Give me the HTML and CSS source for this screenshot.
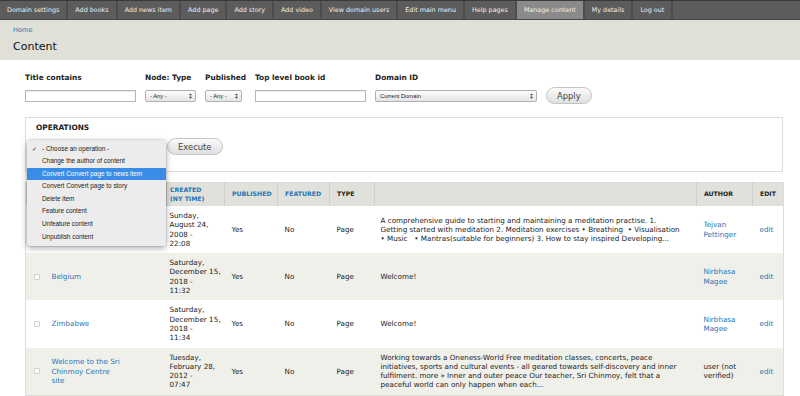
FILE: index.html
```html
<!DOCTYPE html>
<html lang="en">
<head>
    <meta charset="UTF-8">
    <meta name="viewport" content="width=device-width, initial-scale=1.0">
    <title>Content</title>
    <link rel="stylesheet" href="styles.css">
</head>
<body>
    <nav class="toolbar">
        <a href="#">Domain settings</a>
        <a href="#">Add books</a>
        <a href="#">Add news item</a>
        <a href="#">Add page</a>
        <a href="#">Add story</a>
        <a href="#">Add video</a>
        <a href="#">View domain users</a>
        <a href="#">Edit main menu</a>
        <a href="#">Help pages</a>
        <a href="#" class="active">Manage content</a>
        <a href="#">My details</a>
        <a href="#">Log out</a>
    </nav>

    <header class="page-head">
        <a class="crumb" href="#">Home</a>
        <h1>Content</h1>
    </header>

    <div class="content">
        <form class="filters">
            <div class="filter w-text">
                <label>Title contains</label>
                <input type="text" class="text-input">
            </div>
            <div class="filter w-type">
                <label>Node: Type</label>
                <div class="select">- Any -<svg class="arrows" viewBox="0 0 4 8"><path d="M0 3 L2 0.5 L4 3 Z M0 5 L2 7.5 L4 5 Z"/></svg></div>
            </div>
            <div class="filter w-pub">
                <label>Published</label>
                <div class="select">- Any -<svg class="arrows" viewBox="0 0 4 8"><path d="M0 3 L2 0.5 L4 3 Z M0 5 L2 7.5 L4 5 Z"/></svg></div>
            </div>
            <div class="filter w-text">
                <label>Top level book id</label>
                <input type="text" class="text-input">
            </div>
            <div class="filter w-domain">
                <label>Domain ID</label>
                <div class="select">Current Domain<svg class="arrows" viewBox="0 0 4 8"><path d="M0 3 L2 0.5 L4 3 Z M0 5 L2 7.5 L4 5 Z"/></svg></div>
            </div>
            <button type="button" class="btn btn-apply">Apply</button>
        </form>

        <div class="operations">
            <div class="op-title">OPERATIONS</div>
            <div class="op-row">
                <div class="op-select">
                    <div class="select">- Choose an operation -</div>
                    <ul class="menu">
                        <li class="checked">- Choose an operation -</li>
                        <li>Change the author of content</li>
                        <li class="hover">Convert Convert page to news item</li>
                        <li>Convert Convert page to story</li>
                        <li>Delete item</li>
                        <li>Feature content</li>
                        <li>Unfeature content</li>
                        <li>Unpublish content</li>
                    </ul>
                </div>
                <button type="button" class="btn">Execute</button>
            </div>
        </div>

        <table class="nodes">
            <colgroup>
                <col style="width:21px">
                <col style="width:120px">
                <col style="width:58px">
                <col style="width:53px">
                <col style="width:52px">
                <col style="width:45px">
                <col style="width:322px">
                <col style="width:56px">
                <col style="width:31px">
            </colgroup>
            <thead>
                <tr>
                    <th class="cb"></th>
                    <th class="title"><a href="#">TITLE</a></th>
                    <th class="created"><a href="#">CREATED (NY TIME)</a></th>
                    <th><a href="#">PUBLISHED</a></th>
                    <th><a href="#">FEATURED</a></th>
                    <th>TYPE</th>
                    <th></th>
                    <th>AUTHOR</th>
                    <th>EDIT</th>
                </tr>
            </thead>
            <tbody>
                <tr>
                    <td class="cb"><input type="checkbox"></td>
                    <td class="title"><a href="#">Meditation</a></td>
                    <td class="created">Sunday, August 24, 2008 -<br>22:08</td>
                    <td>Yes</td>
                    <td>No</td>
                    <td>Page</td>
                    <td class="body">A comprehensive guide to starting and maintaining a meditation practise. 1.<br>Getting started with meditation 2. Meditation exercises &bull; Breathing &nbsp;&bull; Visualisation &bull;&nbsp;Music &nbsp; &bull; Mantras(suitable for beginners) 3. How to stay inspired Developing...</td>
                    <td class="author"><a href="#">Tejvan Pettinger</a></td>
                    <td><a href="#">edit</a></td>
                </tr>
                <tr class="even">
                    <td class="cb"><input type="checkbox"></td>
                    <td class="title"><a href="#">Belgium</a></td>
                    <td class="created">Saturday, December 15, 2018 -<br>11:32</td>
                    <td>Yes</td>
                    <td>No</td>
                    <td>Page</td>
                    <td class="body">Welcome!</td>
                    <td class="author"><a href="#">Nirbhasa Magee</a></td>
                    <td><a href="#">edit</a></td>
                </tr>
                <tr>
                    <td class="cb"><input type="checkbox"></td>
                    <td class="title"><a href="#">Zimbabwe</a></td>
                    <td class="created">Saturday, December 15, 2018 -<br>11:34</td>
                    <td>Yes</td>
                    <td>No</td>
                    <td>Page</td>
                    <td class="body">Welcome!</td>
                    <td class="author"><a href="#">Nirbhasa Magee</a></td>
                    <td><a href="#">edit</a></td>
                </tr>
                <tr class="even">
                    <td class="cb"><input type="checkbox"></td>
                    <td class="title"><a href="#">Welcome to the Sri<br>Chinmoy Centre<br>site</a></td>
                    <td class="created">Tuesday, February 28, 2012 -<br>07:47</td>
                    <td>Yes</td>
                    <td>No</td>
                    <td>Page</td>
                    <td class="body">Working towards a Oneness-World Free meditation classes, concerts, peace initiatives, sports and cultural events - all geared towards self-discovery and inner fulfilment. more &raquo; Inner and outer peace Our teacher, Sri Chinmoy, felt that a peaceful world can only happen when each...</td>
                    <td class="author">user (not verified)</td>
                    <td><a href="#">edit</a></td>
                </tr>
            </tbody>
        </table>
    </div>
</body>
</html>
```

FILE: styles.css
```css
body {
    margin: 0;
    width: 800px;
    height: 396px;
    overflow: hidden;
    font-family: "DejaVu Sans", sans-serif;
    font-size: 7.2px;
    color: #333;
    background-color: #fff;
}
a {
    color: #1e74b8;
    text-decoration: none;
}

/* admin toolbar */
.toolbar {
    display: flex;
    height: 20px;
    box-sizing: border-box;
    background-color: #5c5c5c;
    border-top: 1px solid #3a3a3a;
    border-bottom: 1px solid #464646;
}
.toolbar a {
    display: flex;
    align-items: center;
    padding: 0 7px;
    color: #eee;
    font-size: 6.4px;
    border-right: 2px solid #4c4c4c;
}
.toolbar a.active {
    background-color: #8a8a8a;
}

/* page header */
.page-head {
    height: 40px;
    box-sizing: border-box;
    padding: 6px 13px;
    background-color: #e0e0d9;
}
.crumb {
    display: block;
    font-size: 6.6px;
    line-height: 9px;
}
.page-head h1 {
    margin: 5px 0 0;
    font-size: 11px;
    line-height: 14px;
    font-weight: normal;
    color: #111;
}

.content {
    padding: 13px 17px 0 25px;
}

/* exposed filters */
.filters {
    display: flex;
    align-items: flex-end;
    gap: 9px;
}
.filter {
    display: flex;
    flex-direction: column;
}
.filter label {
    font-size: 7.4px;
    line-height: 9px;
    font-weight: bold;
    color: #222;
    margin-bottom: 8px;
    white-space: nowrap;
}
.w-text { width: 111px; }
.w-type { width: 51px; }
.w-pub { width: 41px; }
.w-domain { width: 162px; }
.w-pub .select { width: 37px; }

.text-input {
    height: 12px;
    box-sizing: border-box;
    margin: 0;
    border: 1px solid #b8b8b8;
    box-shadow: inset 0 1px 1px rgba(0,0,0,0.08);
}
.select {
    display: flex;
    align-items: center;
    justify-content: space-between;
    height: 12px;
    box-sizing: border-box;
    padding: 0 3px 0 4px;
    font-family: "Liberation Sans", sans-serif;
    font-size: 5.8px;
    color: #222;
    background: linear-gradient(#fdfdfd, #e4e4e4);
    border: 1px solid #b0b0b0;
    border-radius: 2px;
    white-space: nowrap;
}
.arrows {
    width: 3px;
    height: 6px;
    fill: #333;
}

.btn {
    height: 17px;
    padding: 0 10px;
    font-family: "DejaVu Sans", sans-serif;
    font-size: 8.4px;
    color: #444;
    background: linear-gradient(#fafafa, #e0e0e0);
    border: 1px solid #c4c4c4;
    border-radius: 9px;
}
.btn-apply {
    margin-bottom: -2px;
}

/* bulk operations */
.operations {
    margin-top: 15px;
    padding: 5px 10px 16px;
    border: 1px solid #dcdcdc;
}
.op-title {
    font-size: 7.4px;
    line-height: 10px;
    font-weight: bold;
    color: #222;
}
.op-row {
    display: flex;
    align-items: center;
    gap: 6px;
    margin-top: 5px;
}
.op-select {
    position: relative;
    width: 125px;
}
.menu {
    position: absolute;
    left: -9px;
    top: -1px;
    width: 139px;
    margin: 0;
    padding: 3px 0 3px;
    list-style: none;
    font-family: "Liberation Sans", sans-serif;
    font-size: 6.4px;
    line-height: 12.6px;
    color: #222;
    background-color: rgba(236,236,236,0.98);
    border-radius: 4px;
    box-shadow: 0 2px 6px rgba(0,0,0,0.35), 0 0 0 1px rgba(0,0,0,0.08);
    z-index: 2;
}
.menu li {
    padding-left: 15px;
    white-space: nowrap;
}
.menu li.checked::before {
    content: "\2713";
    display: inline-block;
    width: 10px;
    margin-left: -10px;
    font-size: 6px;
}
.menu li.hover {
    background-color: #3b8ce6;
    color: #fff;
}

/* content table */
.nodes {
    width: 100%;
    margin-top: 10px;
    border-collapse: collapse;
    table-layout: fixed;
    border: 1px solid #dcdcdc;
}
.nodes th {
    height: 23px;
    padding: 0 7px;
    text-align: left;
    font-size: 6.2px;
    line-height: 8.6px;
    font-weight: bold;
    color: #222;
    background-color: #e1e1db;
    border-left: 1px solid #cfcfc8;
}
.nodes th:first-child {
    border-left: none;
}
.nodes th.created {
    padding: 0 16px 0 3px;
}
.nodes td {
    padding: 5px 7px;
    line-height: 9.3px;
    vertical-align: middle;
    color: #222;
}
.nodes tr.even td {
    background-color: #f0f0ea;
}
.nodes .cb {
    padding: 0 0 0 8px;
}
.nodes .cb input {
    appearance: none;
    display: block;
    width: 6px;
    height: 6px;
    margin: 0;
    border: 1px solid #d0d0d0;
    border-radius: 1px;
    background-color: #fff;
}
.nodes td.title {
    padding: 5px 6px 5px 5px;
}
.nodes td.created {
    padding-left: 3px;
    padding-right: 3px;
}
.nodes td.body {
    padding-left: 6px;
    padding-right: 5px;
}
```
